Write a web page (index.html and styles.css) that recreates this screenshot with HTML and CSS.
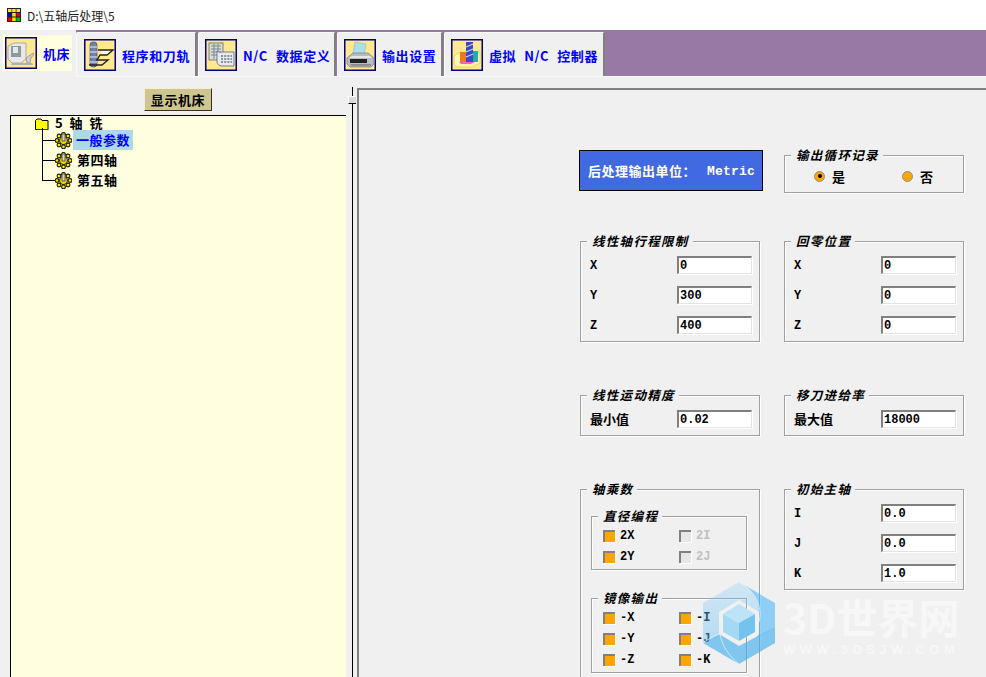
FILE: index.html
```html
<!DOCTYPE html>
<html lang="zh-CN">
<head>
<meta charset="utf-8">
<title>D:\五轴后处理\5</title>
<link rel="stylesheet" href="styles.css">
</head>
<body>
<svg width="0" height="0" class="defs">
  <defs>
    <linearGradient id="wm-pale" x1="0" y1="0" x2="0" y2="1">
      <stop offset="0" stop-color="#78c8f8" stop-opacity=".25"/>
      <stop offset="1" stop-color="#78c8f8" stop-opacity=".5"/>
    </linearGradient>
    <g id="gear">
      <g fill="#ffe600" stroke="#1c1c00" stroke-width="1.100">
        <circle cx="8.500" cy="2.400" r="1.900"/><circle cx="13" cy="4" r="1.900"/><circle cx="15" cy="8.500" r="1.900"/><circle cx="13" cy="13" r="1.900"/>
        <circle cx="8.500" cy="14.800" r="1.900"/><circle cx="4" cy="13" r="1.900"/><circle cx="2" cy="8.500" r="1.900"/><circle cx="4" cy="4" r="1.900"/>
      </g>
      <circle cx="8.500" cy="8.500" r="4.400" fill="#1c1c00"/>
      <circle cx="8.500" cy="8.500" r="3.400" fill="#f2d800"/>
      <rect x="7" y="2" width="3" height="7" fill="#d4d4d4" stroke="#333" stroke-width=".7"/>
    </g>
  </defs>
</svg>

<header class="titlebar">
  <svg class="app-icon" width="14" height="14" viewBox="0 0 14 14">
    <rect width="14" height="14" fill="#222"/>
    <rect x="1" y="1" width="3.500" height="3" fill="#ffe800"/><rect x="5.200" y="1" width="3.500" height="3" fill="#ffe800"/><rect x="9.500" y="1" width="3.500" height="3" fill="#ffe800"/>
    <rect x="1" y="5" width="3.500" height="3.500" fill="#0000e0"/><rect x="5.200" y="5" width="3.500" height="3.500" fill="#ffe800"/><rect x="9.500" y="5" width="3.500" height="3.500" fill="#e00000"/>
    <rect x="1" y="9.500" width="3.500" height="3.500" fill="#e00000"/><rect x="5.200" y="9.500" width="3.500" height="3.500" fill="#ffe800"/><rect x="9.500" y="9.500" width="3.500" height="3.500" fill="#00c000"/>
  </svg>
  <span class="title-text">D:\五轴后处理\5</span>
</header>

<nav class="tabbar">
  <div class="tab tab-active">
    <div class="tab-active-inner">
      <svg class="tab-icon" viewBox="0 0 32 32">
        <rect x=".75" y=".75" width="30.500" height="30.500" fill="#ffe88f" stroke="#000080" stroke-width="1.500"/>
        <path d="M3 22V9l6-3h12v16l-5 4H7z" fill="#e8e8e8" stroke="#9a9a9a" stroke-width=".8"/>
        <rect x="6" y="9" width="10" height="11" fill="#8f9a9a"/>
        <rect x="8" y="10" width="5" height="6" fill="#dfeaea"/>
        <path d="M21 21l7-5 1 1-3 4-1 5h-3z" fill="#cfcfcf" stroke="#8a8a8a" stroke-width=".7"/>
        <path d="M7 26h20l1 2H6z" fill="#b0b0b0"/>
      </svg>
      <span class="tab-label">机床</span>
    </div>
  </div>
  <div class="tab">
    <svg class="tab-icon" viewBox="0 0 32 32">
      <rect x=".75" y=".75" width="30.500" height="30.500" fill="#ffe88f" stroke="#000080" stroke-width="1.500"/>
      <rect x="6" y="3" width="7" height="25" rx="3" fill="#6f7fb0" stroke="#33406a" stroke-width=".6"/>
      <path d="M6 8h7M6 13h7M6 18h7M6 23h7" stroke="#c4ccdf" stroke-width="1.400"/>
      <path d="M14 11h15l-6 5h-7l-3 5h11l-6 5H5" fill="none" stroke="#222" stroke-width="1.400"/>
      <path d="M17 12h9l-3 3h-6z" fill="#f4f4f4"/>
    </svg>
    <span class="tab-label">程序和刀轨</span>
  </div>
  <div class="tab">
    <svg class="tab-icon" viewBox="0 0 32 32">
      <rect x=".75" y=".75" width="30.500" height="30.500" fill="#ffe88f" stroke="#000080" stroke-width="1.500"/>
      <rect x="4" y="4" width="14" height="17" fill="#d8dcdc" stroke="#606a70" stroke-width=".8"/>
      <path d="M6 7h10M6 10h10M6 13h10M6 16h10M9 5v15M13 5v15" stroke="#7a8890" stroke-width="1"/>
      <path d="M12 12c3 2 3 1 6 1h11v14H17c-3 0-5-2-5-4z" fill="#e4eaf2" stroke="#5a6670" stroke-width=".8"/>
      <path d="M16 17h11M16 20h11M16 23h11" stroke="#333" stroke-width="1.200" stroke-dasharray="2 1.200"/>
    </svg>
    <span class="tab-label">N/C 数据定义</span>
  </div>
  <div class="tab">
    <svg class="tab-icon" viewBox="0 0 32 32">
      <rect x=".75" y=".75" width="30.500" height="30.500" fill="#ffe88f" stroke="#000080" stroke-width="1.500"/>
      <path d="M11 3l11 2-2 11-11-2z" fill="#a8e0f0" stroke="#8ab" stroke-width=".5"/>
      <path d="M3 19l6-5h15l6 5v6l-3 3H6l-3-3z" fill="#b8bcc0" stroke="#777" stroke-width=".7"/>
      <path d="M5 19h23l-2-2H8z" fill="#e4e6e8"/>
      <rect x="6" y="20" width="17" height="4" fill="#222"/>
      <path d="M6 25h21v2H7z" fill="#8a8e92"/>
    </svg>
    <span class="tab-label">输出设置</span>
  </div>
  <div class="tab">
    <svg class="tab-icon" viewBox="0 0 32 32">
      <rect x=".75" y=".75" width="30.500" height="30.500" fill="#ffe88f" stroke="#000080" stroke-width="1.500"/>
      <path d="M3 17l6-4h20v11l-8 4H7l-4-2z" fill="#fff6b0" stroke="#e8d040" stroke-width=".8"/>
      <rect x="9" y="13" width="7" height="10" fill="#f07820"/>
      <rect x="21" y="12" width="6" height="11" fill="#20b0a8"/>
      <rect x="15" y="3" width="7" height="21" fill="#3a48c8"/>
      <path d="M15 8l7-3M15 13l7-3M15 18l7-3" stroke="#c8d0f0" stroke-width="1.100"/>
      <path d="M8 23h16l-4 2H10z" fill="#ee60d0"/>
    </svg>
    <span class="tab-label">虚拟 N/C 控制器</span>
  </div>
</nav>

<main class="workspace">
  <aside class="side">
    <div class="side-action"><button class="show-btn" type="button">显示机床</button></div>
    <div class="tree">
      <div class="tree-root">
        <svg class="folder" width="14" height="12" viewBox="0 0 14 12">
          <path d="M.5 11.500V2.500L2 1h4l1 1.500h6v9z" fill="#ffff00" stroke="#000"/>
          <path d="M14 3v9H2" fill="none" stroke="#777"/>
        </svg>
        <span class="tree-root-label">5 轴 铣</span>
      </div>
      <ul class="tree-list">
        <li class="tree-item">
          <svg class="gear" width="17" height="17" viewBox="0 0 17 17"><use href="#gear"/></svg>
          <span class="tree-label tree-label-selected">一般参数</span>
        </li>
        <li class="tree-item">
          <svg class="gear" width="17" height="17" viewBox="0 0 17 17"><use href="#gear"/></svg>
          <span class="tree-label">第四轴</span>
        </li>
        <li class="tree-item">
          <svg class="gear" width="17" height="17" viewBox="0 0 17 17"><use href="#gear"/></svg>
          <span class="tree-label">第五轴</span>
        </li>
      </ul>
    </div>
  </aside>

  <div class="sash"><span class="sash-handle"></span></div>

  <section class="panel">
    <div class="form-grid">
      <div class="row row-top">
        <div class="unit-box">后处理输出单位：<span class="latin">Metric</span></div>
        <div class="group group-cycle">
          <span class="legend">输出循环记录</span>
          <div class="radio-row">
            <label class="radio-item"><span class="radio radio-on"></span>是</label>
            <label class="radio-item"><span class="radio"></span>否</label>
          </div>
        </div>
      </div>

      <div class="row row-axes">
        <div class="group group-fields">
          <span class="legend">线性轴行程限制</span>
          <div class="field-row"><span class="field-label">X</span><div class="field">0</div></div>
          <div class="field-row"><span class="field-label">Y</span><div class="field">300</div></div>
          <div class="field-row"><span class="field-label">Z</span><div class="field">400</div></div>
        </div>
        <div class="group group-fields">
          <span class="legend">回零位置</span>
          <div class="field-row"><span class="field-label">X</span><div class="field">0</div></div>
          <div class="field-row"><span class="field-label">Y</span><div class="field">0</div></div>
          <div class="field-row"><span class="field-label">Z</span><div class="field">0</div></div>
        </div>
      </div>

      <div class="row row-single">
        <div class="group group-single">
          <span class="legend">线性运动精度</span>
          <div class="field-row"><span class="field-label field-label-cjk">最小值</span><div class="field">0.02</div></div>
        </div>
        <div class="group group-single">
          <span class="legend">移刀进给率</span>
          <div class="field-row"><span class="field-label field-label-cjk">最大值</span><div class="field">18000</div></div>
        </div>
      </div>

      <div class="row row-bottom">
        <div class="group group-multiplier">
          <span class="legend">轴乘数</span>
          <div class="group inner-group inner-diameter">
            <span class="legend">直径编程</span>
            <div class="check-grid">
              <span class="check-item"><span class="check"></span>2X</span>
              <span class="check-item check-off"><span class="check"></span>2I</span>
              <span class="check-item"><span class="check"></span>2Y</span>
              <span class="check-item check-off"><span class="check"></span>2J</span>
            </div>
          </div>
          <div class="group inner-group inner-mirror">
            <span class="legend">镜像输出</span>
            <div class="check-grid">
              <span class="check-item"><span class="check"></span>-X</span>
              <span class="check-item"><span class="check"></span>-I</span>
              <span class="check-item"><span class="check"></span>-Y</span>
              <span class="check-item"><span class="check"></span>-J</span>
              <span class="check-item"><span class="check"></span>-Z</span>
              <span class="check-item"><span class="check"></span>-K</span>
            </div>
          </div>
        </div>
        <div class="group group-fields">
          <span class="legend">初始主轴</span>
          <div class="field-row"><span class="field-label">I</span><div class="field">0.0</div></div>
          <div class="field-row"><span class="field-label">J</span><div class="field">0.0</div></div>
          <div class="field-row"><span class="field-label">K</span><div class="field">1.0</div></div>
        </div>
      </div>
    </div>
  </section>
</main>

<div class="watermark">
  <svg class="wm-logo" width="72" height="82" viewBox="0 0 72 82">
    <path d="M36 0L0 21V61L16 52V30L36 18L56 30C56 18 48 6 36 0Z" fill="url(#wm-pale)"/>
    <path d="M36 0L72 21V45L53 56L56 52V30C56 18 48 6 36 0Z" fill="#48b7f8" fill-opacity=".58"/>
    <path d="M0 61L16 52L36 64L72 45V61L36 82Z" fill="#3cacee" fill-opacity=".62"/>
    <path d="M36 0C52 9 60 24 56 40M0 61C6 57 12 53 17 52C19 64 26 74 36 82" fill="none" stroke="#e8f6fd" stroke-opacity=".7"/>
    <path d="M36 22L52 32V50L36 59L20 50V32Z" fill="#e6f3fa" fill-opacity=".6"/>
    <path d="M36 22L52 32L36 41L20 32Z" fill="#bde3f8"/>
    <path d="M20 32L36 41V59L20 50Z" fill="#a5d8f5"/>
    <path d="M52 32L36 41V59L52 50Z" fill="#73c3ec"/>
  </svg>
  <div class="wm-text">
    <div class="wm-name">3D世界网</div>
    <div class="wm-url">WWW.3DSJW.COM</div>
  </div>
</div>
</body>
</html>
```

FILE: styles.css
```css
* { box-sizing: border-box; }

html, body {
  margin: 0;
  height: 677px;
  overflow: hidden;
  background: #f0f0f0;
  font-family: "Noto Sans CJK SC", "Liberation Sans", sans-serif;
  color: #000;
}

.defs { position: absolute; }

/* Title bar */
.titlebar {
  height: 30px;
  background: #fff;
  display: flex;
  align-items: center;
  padding-left: 7px;
  gap: 6px;
}
.title-text { font-size: 12px; color: #222; }

/* Tabs */
.tabbar {
  height: 47px;
  display: flex;
  background: #9878a4;
  border-bottom: 1px solid #f8f8f8;
}
.tab {
  margin-top: 2px;
  display: flex;
  align-items: center;
  gap: 6px;
  padding: 1px 4px 0 6px;
  background: #f0f0f0;
  border-top: 1px solid #fafafa;
  border-left: 1px solid #fafafa;
  border-right: 2px solid #808080;
  border-radius: 2px 2px 0 0;
  margin-right: 1px;
}
.tab:nth-child(2) { width: 121px; padding-left: 7px; }
.tab:nth-child(3) { width: 138px; }
.tab:nth-child(4) { width: 106px; }
.tab:nth-child(5) { width: 161px; margin-right: 0; }
.tab-icon { width: 32px; height: 32px; flex: none; }
.tab-label {
  font-size: 13px;
  font-weight: 700;
  letter-spacing: .6px;
  word-spacing: 4.500px;
  white-space: pre;
  color: #0000ff;
}
.tab-active {
  width: 76px;
  margin: 0 0 -1px;
  padding: 5px 0 0 3px;
  align-items: flex-start;
  border: 0;
  border-radius: 0;
}
.tab-active-inner {
  width: 69px;
  height: 36px;
  background: #ffffe0;
  display: flex;
  align-items: center;
  gap: 6px;
  padding-left: 2px;
}

/* Main split */
.workspace {
  display: flex;
  height: 600px;
  overflow: hidden;
}
.side {
  width: 346px;
  flex: none;
  padding: 11px 0 0 10px;
  display: flex;
  flex-direction: column;
}
.side-action { display: flex; justify-content: center; margin-bottom: 4px; }
.show-btn {
  width: 68px;
  height: 23px;
  padding: 0;
  font: 700 13px "Noto Sans CJK SC", sans-serif;
  letter-spacing: .6px;
  color: #000;
  background: #cfc58f;
  border: 1px solid;
  border-color: #f4efd4 #33302a #33302a #f4efd4;
}
.tree {
  flex: 1;
  background: #ffffe0;
  border-top: 1px solid #000;
  border-left: 1px solid #000;
  padding: 0 0 0 24px;
}
.tree-root {
  height: 14px;
  display: flex;
  align-items: center;
  gap: 6px;
}
.folder { flex: none; margin-top: 2px; }
.tree-root-label {
  font-size: 13px;
  font-weight: 700;
  white-space: pre;
  word-spacing: 4px;
  margin-top: -2px;
}
.tree-list {
  list-style: none;
  margin: 0 0 0 7px;
  padding: 0 0 0 13px;
  position: relative;
}
.tree-list::before {
  content: "";
  position: absolute;
  left: 0;
  top: -2px;
  bottom: 10px;
  border-left: 1px solid #000;
}
.tree-item {
  height: 20px;
  display: flex;
  align-items: center;
  position: relative;
}
.tree-item::before {
  content: "";
  position: absolute;
  left: -13px;
  top: 10px;
  width: 13px;
  border-top: 1px solid #000;
}
.gear { flex: none; margin-right: 1px; }
.tree-label {
  height: 20px;
  line-height: 19px;
  padding: 0 3px 0 4px;
  font-size: 13px;
  font-weight: 700;
  letter-spacing: .5px;
}
.tree-label-selected { color: #0000ff; background: #add8e6; padding-left: 3px; }

.sash {
  width: 11px;
  flex: none;
  margin-top: 10px;
  position: relative;
}
.sash::before {
  content: "";
  position: absolute;
  left: 6px;
  top: 0;
  bottom: 0;
  border-left: 1px solid #000;
}
.sash-handle {
  position: absolute;
  left: 2px;
  top: 9px;
  width: 8px;
  height: 8px;
  background: #dcdcdc;
  border-top: 1px solid #fff;
  border-left: 1px solid #fff;
  border-bottom: 1px solid #000;
}

/* Right panel */
.panel {
  flex: 1;
  margin-top: 11px;
  border-top: 2px solid #808080;
  border-left: 2px solid #808080;
  padding: 60px 0 0 221px;
  overflow: hidden;
}
.form-grid { display: flex; flex-direction: column; }
.row {
  display: grid;
  grid-template-columns: 180px 180px;
  column-gap: 24px;
  align-items: start;
}
.row-axes { margin-top: 49px; }
.row-single { margin-top: 53px; }
.row-bottom { margin-top: 53px; }
.row-top { height: 42px; }

.unit-box {
  width: 184px;
  height: 41px;
  margin-left: -1px;
  padding: 0 0 1px 8px;
  display: flex;
  align-items: center;
  white-space: pre;
  background: #4169e1;
  border: 1px solid #000;
  color: #fff;
  font-size: 13px;
  font-weight: 700;
  letter-spacing: .5px;
}
.latin {
  font-family: "Liberation Mono", monospace;
  font-size: 13px;
  letter-spacing: .2px;
  margin: 2px 0 0 11px;
}

.group {
  position: relative;
  border: 1px solid #a0a0a0;
  box-shadow: 1px 1px 0 #fff, inset 1px 1px 0 #fff;
}
.legend {
  position: absolute;
  left: 6px;
  top: -10px;
  padding: 0 4px 0 5px;
  background: #f0f0f0;
  font-size: 12.500px;
  line-height: 17px;
  font-weight: 700;
  font-style: italic;
  letter-spacing: 1.300px;
  white-space: nowrap;
}
.group-cycle { height: 38px; margin-top: 5px; }
.radio-row {
  display: grid;
  grid-template-columns: 88px 1fr;
  padding: 11px 0 0 29px;
}
.radio-item {
  display: flex;
  align-items: center;
  gap: 7px;
  height: 20px;
  margin-top: -1px;
  font-size: 13px;
  font-weight: 700;
}
.radio {
  width: 11px;
  height: 11px;
  border-radius: 50%;
  background: #ffa500;
  border: 1px solid #909090;
  position: relative;
}
.radio-on::after {
  content: "";
  position: absolute;
  left: 2.500px;
  top: 2.500px;
  width: 4px;
  height: 4px;
  border-radius: 50%;
  background: #000;
}

.group-fields { height: 101px; padding-top: 14px; }
.group-single { height: 41px; padding-top: 14px; }
.field-row {
  height: 30px;
  display: flex;
  justify-content: space-between;
  padding: 0 7px 0 9px;
}
.field-label {
  font-family: "Liberation Mono", monospace;
  font-size: 12px;
  font-weight: 700;
  line-height: 21px;
}
.field-label-cjk {
  font-family: "Noto Sans CJK SC", sans-serif;
  font-size: 13px;
  line-height: 18px;
}
.field {
  width: 75px;
  height: 18px;
  padding-left: 1px;
  background: #fff;
  border-top: 2px solid #808080;
  border-left: 2px solid #808080;
  border-right: 1px solid #e3e3e3;
  border-bottom: 1px solid #e3e3e3;
  box-shadow: 1px 1px 0 #fff;
  font-family: "Liberation Mono", monospace;
  font-size: 12px;
  font-weight: 700;
  line-height: 17px;
}

.group-multiplier { height: 250px; padding: 26px 0 0 10px; }
.inner-group { width: 156px; }
.inner-diameter { height: 54px; }
.inner-mirror { height: 75px; margin-top: 28px; }
.check-grid {
  display: grid;
  grid-template-columns: 76px 1fr;
  grid-auto-rows: 21px;
  padding: 8px 0 0 11px;
}
.check-item {
  display: flex;
  align-items: center;
  gap: 5px;
  font-family: "Liberation Mono", monospace;
  font-size: 12px;
  font-weight: 700;
  white-space: nowrap;
}
.check {
  width: 12px;
  height: 12px;
  background: #ffa500;
  border-top: 2px solid #808080;
  border-left: 2px solid #808080;
  box-shadow: 1px 1px 0 #fff;
}
.check-off { color: #c0c0c0; }
.check-off .check { background: #e6e6e6; }

/* Watermark overlay */
.watermark {
  position: absolute;
  left: 703px;
  top: 582px;
  display: flex;
  gap: 8px;
  pointer-events: none;
}
.wm-logo { flex: none; }
.wm-text { padding-top: 14px; }
.wm-name {
  font-family: "Noto Sans CJK SC", sans-serif;
  font-size: 41px;
  line-height: 40px;
  font-weight: 700;
  white-space: nowrap;
  color: rgba(255, 255, 255, .5);
}
.wm-url {
  font-family: "Liberation Sans", sans-serif;
  font-size: 13px;
  line-height: 14px;
  font-weight: 700;
  letter-spacing: 4.500px;
  white-space: nowrap;
  margin-top: 7px;
  color: rgba(255, 255, 255, .5);
}
```
